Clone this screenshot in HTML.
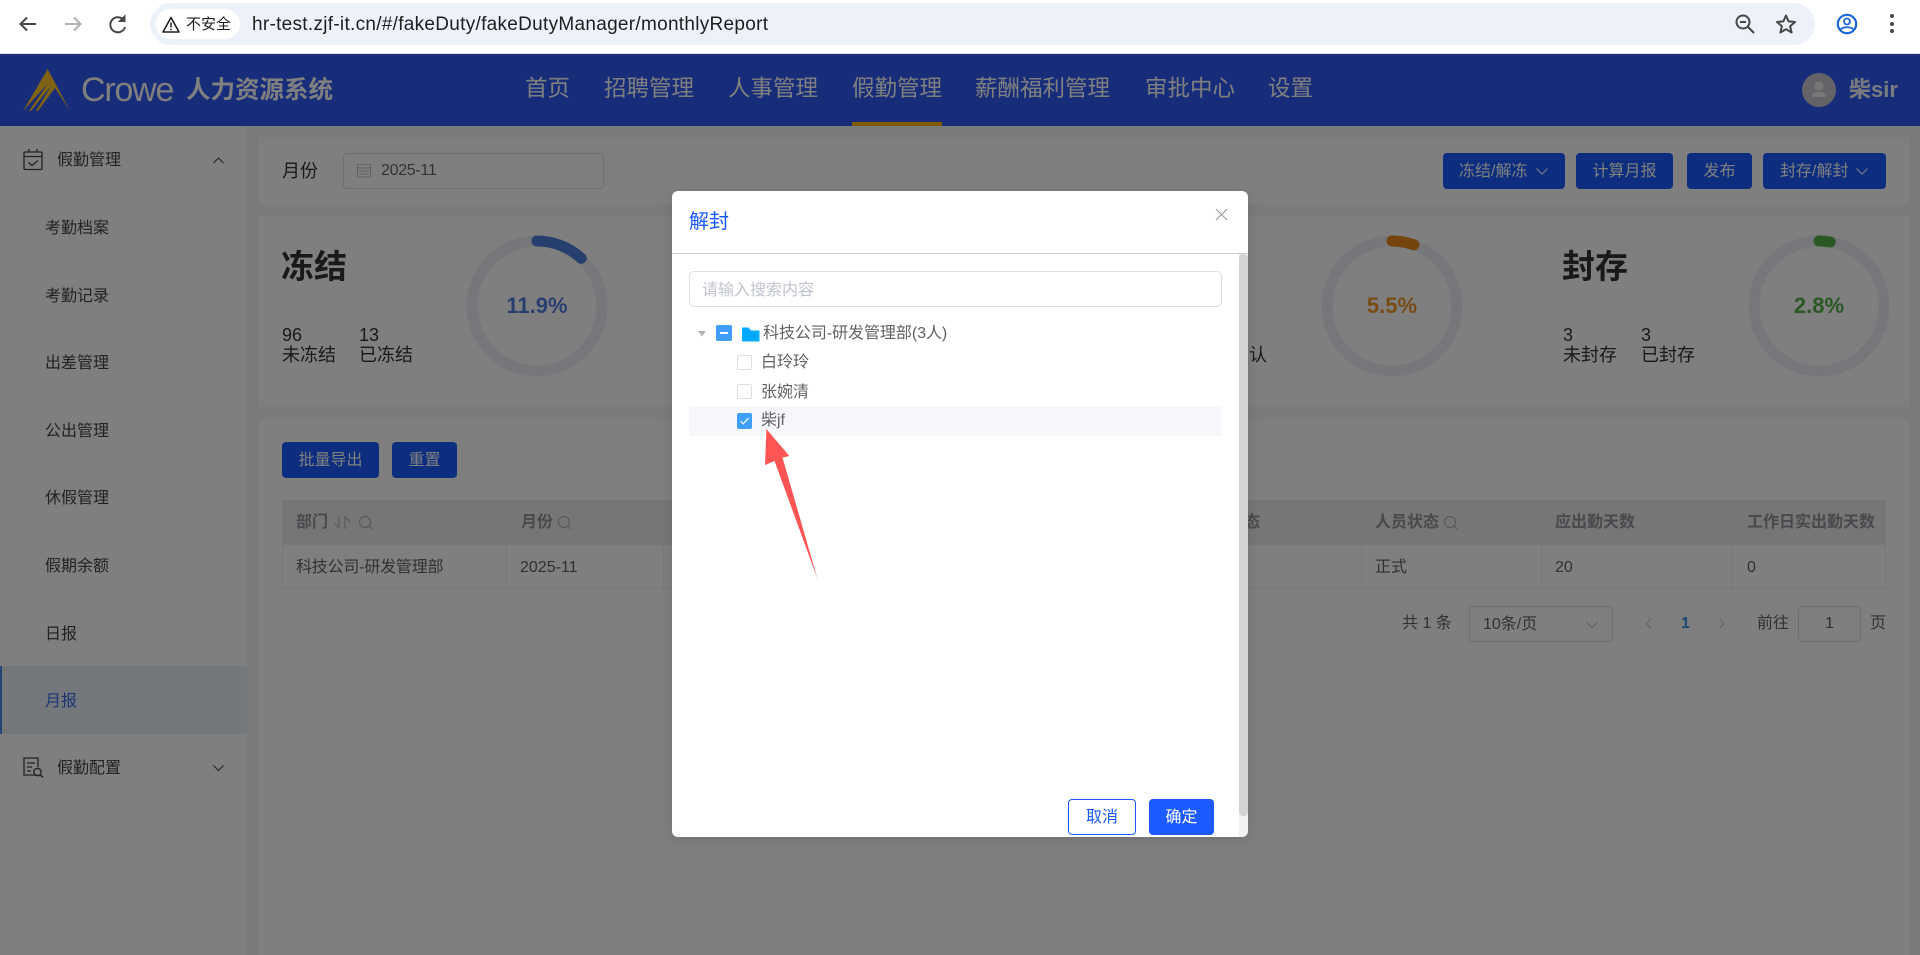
<!DOCTYPE html>
<html lang="zh-CN">
<head>
<meta charset="utf-8">
<title>月报</title>
<style>
*{box-sizing:border-box}
html,body{margin:0;padding:0;width:1920px;height:955px;overflow:hidden;background:#fff;font-family:"Liberation Sans","Noto Sans CJK SC",sans-serif}
.a{position:absolute}
.t{position:absolute;white-space:nowrap;line-height:20px;font-size:16px;color:#444}
.btn{position:absolute;background:#1a5aff;color:#fff;border-radius:4px;text-align:center;font-size:16px;height:36px;line-height:38px;white-space:nowrap}
.panel{position:absolute;background:#fff}
svg{position:absolute;overflow:visible}
.nav{position:absolute;top:76px;line-height:26px;font-size:22.5px;color:#fff;white-space:nowrap}
.side{position:absolute;left:45px;font-size:16px;line-height:20px;color:#444;white-space:nowrap}
.d{position:absolute;white-space:nowrap;line-height:20px;font-size:16px;color:#606266}
.cb{position:absolute;width:15px;height:15px;border:1px solid #dcdfe6;border-radius:2px;background:#fff}
</style>
</head>
<body>
<!-- Browser chrome -->
<div class="a" style="left:0;top:0;width:1920px;height:54px;background:#fff;border-bottom:1px solid #dfe1e5"></div>
<svg style="left:0;top:0" width="200" height="54" fill="none">
  <path d="M36 24H21M27 17.500L20.500 24L27 30.500" stroke="#474747" stroke-width="2"/>
  <path d="M65 24H80M74 17.500L80.500 24L74 30.500" stroke="#b0b0b0" stroke-width="2"/>
  <path d="M124 20.500A7.500 7.500 0 1 0 125 27" stroke="#474747" stroke-width="2"/>
  <path d="M125 15.500V21.500H119Z" fill="#474747" stroke="#474747"/>
</svg>
<div class="a" style="left:150px;top:3px;width:1665px;height:42px;border-radius:21px;background:#ecf1fa"></div>
<div class="a" style="left:156px;top:9px;width:84px;height:30px;border-radius:15px;background:#fff"></div>
<svg style="left:162px;top:16px" width="18" height="18" fill="none">
  <path d="M9 1.500L17 16H1Z" stroke="#222" stroke-width="1.600" stroke-linejoin="round"/>
  <path d="M9 6.500V11.500M9 12.700V14.300" stroke="#222" stroke-width="1.500"/>
</svg>
<div class="t" style="left:186px;top:15px;font-size:15px;color:#1f1f1f">不安全</div>
<div class="t" style="left:252px;top:14px;font-size:19px;color:#1f1f1f;line-height:22px;letter-spacing:.29px">hr-test.zjf-it.cn/#/fakeDuty/fakeDutyManager/monthlyReport</div>
<svg style="left:1730px;top:8px" width="180" height="32" fill="none">
  <circle cx="13" cy="14" r="6.500" stroke="#474747" stroke-width="2"/>
  <path d="M10 14H16" stroke="#474747" stroke-width="2"/>
  <path d="M18 19L24 25" stroke="#474747" stroke-width="2"/>
  <path d="M56 7.500L58.600 13.400L65 14L60.100 18.200L61.600 24.500L56 21.200L50.400 24.500L51.900 18.200L47 14L53.400 13.400Z" stroke="#474747" stroke-width="2" stroke-linejoin="round"/>
  <circle cx="117" cy="16" r="9.200" stroke="#1a66d9" stroke-width="2.200"/>
  <circle cx="117" cy="13.500" r="3" stroke="#1a66d9" stroke-width="1.800"/>
  <path d="M110.500 21.500C113 18.500 121 18.500 123.500 21.500" stroke="#1a66d9" stroke-width="1.800"/>
  <circle cx="162" cy="8" r="2" fill="#474747"/><circle cx="162" cy="16" r="2" fill="#474747"/><circle cx="162" cy="23" r="2" fill="#474747"/>
</svg>

<!-- Header -->
<div class="a" style="left:0;top:54px;width:1920px;height:72px;background:#305af4"></div>
<svg style="left:0;top:54px" width="90" height="72">
  <path d="M47.700 15L70 57L55 34L38 57L36 57L51 32L31 57L29 57L47.500 30L23 57Z" fill="#ffc428"/>
</svg>
<div class="t" style="left:81px;top:70px;font-size:34px;line-height:40px;color:#fff;letter-spacing:-1.200px">Crowe</div>
<div class="t" style="left:186px;top:76px;font-size:24.500px;line-height:30px;font-weight:bold;color:#fff">人力资源系统</div>
<div class="nav" style="left:525px">首页</div>
<div class="nav" style="left:604px">招聘管理</div>
<div class="nav" style="left:728px">人事管理</div>
<div class="nav" style="left:852px">假勤管理</div>
<div class="nav" style="left:975px">薪酬福利管理</div>
<div class="nav" style="left:1145px">审批中心</div>
<div class="nav" style="left:1268px">设置</div>
<div class="a" style="left:852px;top:122px;width:90px;height:4px;background:#ffb400"></div>
<div class="a" style="left:1802px;top:73px;width:34px;height:34px;border-radius:50%;background:#c8c9d0"></div>
<svg style="left:1802px;top:73px" width="34" height="34"><circle cx="17" cy="13" r="4.500" fill="#eee"/><path d="M10 24Q10 19 14 19H20Q24 19 24 24Z" fill="#eee"/></svg>
<div class="t" style="left:1849px;top:76px;font-size:22px;line-height:28px;font-weight:bold;color:#f4f6ff">柴sir</div>

<!-- Page background -->
<div class="a" style="left:0;top:126px;width:1920px;height:829px;background:#f5f5f5"></div>

<!-- Sidebar -->
<div class="a" style="left:0;top:126px;width:247px;height:829px;background:#fff"></div>
<svg style="left:22px;top:148px" width="24" height="24" fill="none" stroke="#444" stroke-width="1.300">
  <rect x="2" y="4" width="18" height="17.500" rx="1"/><path d="M2 8.500H20M7 1V4.500M15 1V4.500"/><path d="M6.500 14.500L10 17.500L16 12.500"/>
</svg>
<div class="side" style="left:57px;top:151px">假勤管理</div>
<svg style="left:212px;top:156px" width="14" height="8" fill="none" stroke="#444"><path d="M1.500 7L6.500 2L11.500 7"/></svg>
<div class="side" style="top:219px">考勤档案</div>
<div class="side" style="top:287px">考勤记录</div>
<div class="side" style="top:354px">出差管理</div>
<div class="side" style="top:422px">公出管理</div>
<div class="side" style="top:489px">休假管理</div>
<div class="side" style="top:557px">假期余额</div>
<div class="side" style="top:625px">日报</div>
<div class="a" style="left:0;top:666px;width:247px;height:68px;background:#e8f0f8"></div>
<div class="a" style="left:0;top:666px;width:2px;height:68px;background:#4a8ae8"></div>
<div class="side" style="top:692px;color:#3a6ae8">月报</div>
<svg style="left:22px;top:756px" width="24" height="24" fill="none" stroke="#444" stroke-width="1.300">
  <path d="M15 19H2V2H16V11"/><path d="M5 7H13M5 11H10M5 15H9"/><circle cx="15.500" cy="16" r="3.700"/><path d="M18.500 19L21 21.500"/>
</svg>
<div class="side" style="left:57px;top:759px">假勤配置</div>
<svg style="left:212px;top:764px" width="14" height="8" fill="none" stroke="#444"><path d="M1.500 1.500L6.500 6.500L11.500 1.500"/></svg>

<!-- Filter panel -->
<div class="panel" style="left:259px;top:137px;width:1650px;height:68px"></div>
<div class="t" style="left:282px;top:161px;font-size:18px;color:#333">月份</div>
<div class="a" style="left:343px;top:153px;width:261px;height:36px;border:1px solid #dcdfe6;border-radius:4px;background:#fff"></div>
<svg style="left:357px;top:163px" width="15" height="15" fill="none" stroke="#c0c4cc" stroke-width="1"><rect x=".5" y="1.500" width="13" height="12.500"/><path d="M.5 5H13.500M3 8H11M3 11H11" /></svg>
<div class="t" style="left:381px;top:161px;font-size:16px;color:#666;letter-spacing:-.3px">2025-11</div>
<div class="btn" style="left:1443px;top:153px;width:122px;text-align:left;padding-left:16px">冻结/解冻</div>
<svg style="left:1535px;top:167px" width="14" height="9" fill="none" stroke="#fff"><path d="M1.500 1.500L7 7L12.500 1.500"/></svg>
<div class="btn" style="left:1576px;top:153px;width:97px">计算月报</div>
<div class="btn" style="left:1687px;top:153px;width:65px">发布</div>
<div class="btn" style="left:1763px;top:153px;width:123px;text-align:left;padding-left:17px">封存/解封</div>
<svg style="left:1855px;top:167px" width="14" height="9" fill="none" stroke="#fff"><path d="M1.500 1.500L7 7L12.500 1.500"/></svg>

<!-- Stats panel -->
<div class="panel" style="left:259px;top:216px;width:1650px;height:191px"></div>
<div class="t" style="left:281px;top:247px;font-size:33px;line-height:40px;font-weight:bold;color:#333">冻结</div>
<div class="t" style="left:282px;top:325px;font-size:18px;color:#333">96</div>
<div class="t" style="left:282px;top:345px;font-size:18px;color:#333">未冻结</div>
<div class="t" style="left:359px;top:325px;font-size:18px;color:#333">13</div>
<div class="t" style="left:359px;top:345px;font-size:18px;color:#333">已冻结</div>

<svg style="left:467px;top:236px" width="140" height="140" fill="none">
  <circle cx="70" cy="70" r="65" stroke="#ebeef5" stroke-width="11"/>
  <path d="M70 5A65 65 0 0 1 114.200 22.300" stroke="#4f7fde" stroke-width="11" stroke-linecap="round"/>
</svg>
<div class="t" style="left:467px;top:292px;width:140px;text-align:center;font-size:22px;line-height:28px;font-weight:bold;color:#4f7fde">11.9%</div>

<svg style="left:1322px;top:236px" width="140" height="140" fill="none">
  <circle cx="70" cy="70" r="65" stroke="#ebeef5" stroke-width="11"/>
  <path d="M70 5A65 65 0 0 1 92 8.800" stroke="#e88a1a" stroke-width="11" stroke-linecap="round"/>
</svg>
<div class="t" style="left:1322px;top:292px;width:140px;text-align:center;font-size:22px;line-height:28px;font-weight:bold;color:#f0962a">5.5%</div>
<div class="t" style="left:1249px;top:345px;font-size:18px;color:#333">认</div>

<div class="t" style="left:1562px;top:247px;font-size:33px;line-height:40px;font-weight:bold;color:#333">封存</div>
<div class="t" style="left:1563px;top:325px;font-size:18px;color:#333">3</div>
<div class="t" style="left:1563px;top:345px;font-size:18px;color:#333">未封存</div>
<div class="t" style="left:1641px;top:325px;font-size:18px;color:#333">3</div>
<div class="t" style="left:1641px;top:345px;font-size:18px;color:#333">已封存</div>
<svg style="left:1749px;top:236px" width="140" height="140" fill="none">
  <circle cx="70" cy="70" r="65" stroke="#ebeef5" stroke-width="11"/>
  <path d="M70 5A65 65 0 0 1 81.300 6" stroke="#52b04a" stroke-width="11" stroke-linecap="round"/>
</svg>
<div class="t" style="left:1749px;top:292px;width:140px;text-align:center;font-size:22px;line-height:28px;font-weight:bold;color:#52b04a">2.8%</div>

<!-- Table panel -->
<div class="panel" style="left:259px;top:419px;width:1650px;height:536px"></div>
<div class="btn" style="left:282px;top:442px;width:97px">批量导出</div>
<div class="btn" style="left:392px;top:442px;width:65px">重置</div>

<div class="a" style="left:282px;top:500px;width:1604px;height:89px;border:1px solid #ebeef5;background:#fff"></div>
<div class="a" style="left:283px;top:501px;width:1602px;height:44px;background:#ececec;border-bottom:1px solid #ebeef5"></div>
<div class="a" style="left:506px;top:501px;width:1px;height:88px;background:#ebeef5"></div>
<div class="a" style="left:663px;top:501px;width:1px;height:88px;background:#ebeef5"></div>
<div class="a" style="left:1361px;top:501px;width:1px;height:88px;background:#ebeef5"></div>
<div class="a" style="left:1541px;top:501px;width:1px;height:88px;background:#ebeef5"></div>
<div class="a" style="left:1732px;top:501px;width:1px;height:88px;background:#ebeef5"></div>

<div class="t" style="left:296px;top:513px;font-weight:bold;color:#909399">部门</div>
<svg style="left:332px;top:514px" width="50" height="17" fill="none" stroke="#aaa" stroke-width="1">
  <path d="M7 2V14L3 10M13 15V3L18 8"/><circle cx="33" cy="8" r="5.500"/><path d="M37 12L40 15"/>
</svg>
<div class="t" style="left:521px;top:513px;font-weight:bold;color:#909399">月份</div>
<svg style="left:556.500px;top:514px" width="20" height="17" fill="none" stroke="#aaa" stroke-width="1"><circle cx="7" cy="8" r="5.500"/><path d="M11 12L14 15"/></svg>
<div class="t" style="left:296px;top:558px;color:#606266;letter-spacing:-.2px">科技公司-研发管理部</div>
<div class="t" style="left:520px;top:558px;color:#606266">2025-11</div>
<div class="t" style="left:1228px;top:513px;font-weight:bold;color:#909399">状态</div>
<div class="t" style="left:1375px;top:513px;font-weight:bold;color:#909399">人员状态</div>
<svg style="left:1443px;top:514px" width="20" height="17" fill="none" stroke="#aaa" stroke-width="1"><circle cx="7" cy="8" r="5.500"/><path d="M11 12L14 15"/></svg>
<div class="t" style="left:1555px;top:513px;font-weight:bold;color:#909399">应出勤天数</div>
<div class="t" style="left:1747px;top:513px;font-weight:bold;color:#909399">工作日实出勤天数</div>
<div class="t" style="left:1375px;top:558px;color:#606266">正式</div>
<div class="t" style="left:1555px;top:558px;color:#606266">20</div>
<div class="t" style="left:1747px;top:558px;color:#606266">0</div>

<!-- Pagination -->
<div class="t" style="left:1402px;top:614px;color:#606266">共 1 条</div>
<div class="a" style="left:1469px;top:606px;width:144px;height:36px;border:1px solid #dcdfe6;border-radius:4px"></div>
<div class="t" style="left:1483px;top:615px;color:#606266">10条/页</div>
<svg style="left:1585px;top:620px" width="14" height="9" fill="none" stroke="#c0c4cc"><path d="M1 1.500L7 7.500L13 1.500"/></svg>
<svg style="left:1645px;top:617px" width="8" height="13" fill="none" stroke="#c0c4cc"><path d="M6 1.500L1.500 6.500L6 11.500"/></svg>
<div class="t" style="left:1681px;top:614px;font-weight:bold;color:#3a8ee6">1</div>
<svg style="left:1718px;top:617px" width="8" height="13" fill="none" stroke="#c0c4cc"><path d="M1.500 1.500L6 6.500L1.500 11.500"/></svg>
<div class="t" style="left:1757px;top:614px;color:#606266">前往</div>
<div class="a" style="left:1798px;top:606px;width:63px;height:36px;border:1px solid #dcdfe6;border-radius:4px"></div>
<div class="t" style="left:1798px;top:614px;width:63px;text-align:center;color:#606266">1</div>
<div class="t" style="left:1870px;top:614px;color:#606266">页</div>

<!-- Modal overlay -->
<div class="a" style="left:0;top:54px;width:1920px;height:901px;background:rgba(0,0,0,.5)"></div>

<!-- Dialog -->
<div class="a" style="left:672px;top:191px;width:576px;height:646px;background:#fff;border-radius:6px;box-shadow:0 2px 12px rgba(0,0,0,.12);overflow:hidden">
  <div class="a" style="left:0;top:62px;width:576px;height:1px;background:#cfcfcf"></div>
  <div class="a" style="left:567px;top:63px;width:9px;height:583px;background:#f1f1f1"></div>
  <div class="a" style="left:567px;top:63px;width:9px;height:562px;background:#d2d3d5;border-radius:4px"></div>
</div>
<div class="d" style="left:689px;top:210px;font-size:20px;line-height:24px;color:#1a5aff">解封</div>
<svg style="left:1215px;top:208px" width="13" height="13" fill="none" stroke="#909399" stroke-width="1"><path d="M1 1L12 12M12 1L1 12"/></svg>

<div class="a" style="left:689px;top:271px;width:533px;height:36px;border:1px solid #dcdfe6;border-radius:5px;background:#fff"></div>
<div class="d" style="left:702px;top:281px;color:#c0c4cc">请输入搜索内容</div>

<svg style="left:698px;top:331px" width="8" height="6"><path d="M0 0H8L4 5.500Z" fill="#b0b3b8"/></svg>
<div class="a" style="left:716px;top:325px;width:16px;height:16px;border-radius:2px;background:#409eff"></div>
<div class="a" style="left:720px;top:332px;width:8px;height:2px;background:#fff"></div>
<svg style="left:741px;top:326px" width="19" height="16"><path d="M1 15.500V1.500H7.500L10 4.500H18.500V15.500Z" fill="#00a8ff"/></svg>
<div class="d" style="left:763px;top:324px;letter-spacing:-.05px">科技公司-研发管理部(3人)</div>

<div class="cb" style="left:737px;top:355px"></div>
<div class="d" style="left:761px;top:353px">白玲玲</div>
<div class="cb" style="left:737px;top:384px"></div>
<div class="d" style="left:761px;top:383px">张婉清</div>
<div class="a" style="left:689px;top:406px;width:533px;height:30px;background:#f5f7fa"></div>
<div class="a" style="left:737px;top:413px;width:15px;height:16px;border-radius:2px;background:#409eff"></div>
<svg style="left:737px;top:413px" width="15" height="16" fill="none" stroke="#fff" stroke-width="1.200"><path d="M3.500 8.200L6.300 10.800L11.500 5"/></svg>
<div class="d" style="left:761px;top:411px">柴jf</div>

<div class="a" style="left:1068px;top:799px;width:68px;height:36px;border:1px solid #1a5aff;border-radius:4px;background:#fff;color:#1a5aff;text-align:center;line-height:36px;font-size:16px">取消</div>
<div class="btn" style="left:1149px;top:799px;width:65px">确定</div>

<!-- Arrow annotation -->
<svg style="left:0;top:0" width="1920" height="955"><path d="M766.400 429L789.400 456L782.500 457.500L817.500 579L774.500 461L765 465Z" fill="#ff5555"/></svg>
</body>
</html>
